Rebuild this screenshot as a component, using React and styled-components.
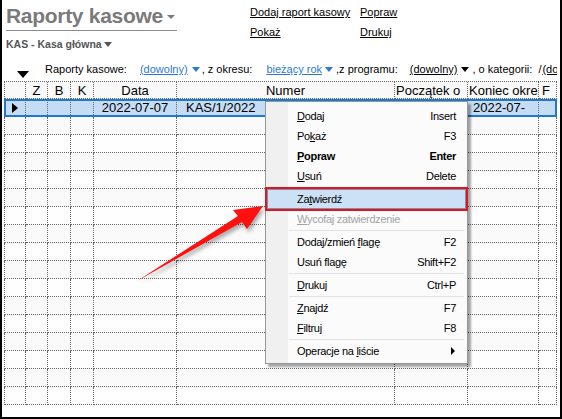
import React from 'react';
import styled, { createGlobalStyle } from 'styled-components';

const Global = createGlobalStyle`
  html, body { margin: 0; padding: 0; background: #fff; }
  body { font-family: "Liberation Sans", Arial, sans-serif; }
  * { box-sizing: border-box; }
`;

const Frame = styled.div`
  position: relative;
  width: 562px;
  height: 419px;
  border-left: 2px solid #000;
  border-right: 2px solid #000;
  border-bottom: 2px solid #000;
  background: #fff;
  overflow: hidden;
  font-family: "Liberation Sans", Arial, sans-serif;
  color: #000;
`;

const TopBar = styled.div`
  display: flex;
  height: 57px;
  padding-left: 4px;
`;

const TitleBlock = styled.div`
  width: 244px;
  display: flex;
  flex-direction: column;
  align-items: flex-start;
  padding-top: 4px;
`;

const Title = styled.div`
  display: flex;
  align-items: center;
  gap: 4px;
  width: 171px;
  white-space: nowrap;
  font-size: 21px;
  font-weight: bold;
  line-height: 24px;
  color: #7a7a7a;
  letter-spacing: -0.3px;
  padding-bottom: 2px;
  border-bottom: 1px solid #8c8c8c;
`;

const Caret = styled.span`
  display: inline-block;
  flex: none;
  width: 0;
  height: 0;
  border-left: ${p => p.$w / 2}px solid transparent;
  border-right: ${p => p.$w / 2}px solid transparent;
  border-top: ${p => p.$h}px solid ${p => p.$color || '#000'};
  margin-left: ${p => p.$ml || 0}px;
  margin-top: ${p => p.$mt || 0}px;
`;

const Subtitle = styled.div`
  display: flex;
  align-items: center;
  gap: 2px;
  margin-top: 6px;
  font-size: 10.5px;
  font-weight: bold;
  line-height: 14px;
  color: #555;
  white-space: nowrap;
`;

const Links = styled.div`
  display: grid;
  grid-template-columns: 110px auto;
  row-gap: 6px;
  padding-top: 5px;
  align-content: start;
`;

const Link = styled.span`
  font-size: 11px;
  line-height: 14px;
  text-decoration: underline;
  color: #000;
  justify-self: start;
`;

const FilterRow = styled.div`
  display: flex;
  align-items: center;
  height: 24px;
  padding-left: 15px;
  font-size: 11px;
  white-space: nowrap;
  overflow: hidden;
  width: 556px;
`;

const DownMark = styled.span`
  flex: none;
  width: 0;
  height: 0;
  border-left: 6px solid transparent;
  border-right: 6px solid transparent;
  border-top: 7px solid #000;
  margin-top: 10px;
  margin-right: 16px;
`;

const Label = styled.span`
  flex: none;
  margin-left: ${p => p.$ml || 0}px;
`;

const Pick = styled.span`
  flex: none;
  display: inline-flex;
  align-items: center;
  gap: 2px;
  margin-left: ${p => p.$ml || 0}px;
  color: ${p => p.$color};
  & > u { text-decoration: underline; }
`;

const Clip = styled.span`
  display: inline-block;
  width: ${p => p.$w}px;
  overflow: hidden;
  vertical-align: bottom;
`;

const Table = styled.div`
  margin-left: 2px;
  width: 553px;
  background: #fcfcfc;
`;

const COLS = '22px 22px 23px 23px 83px 218px 73px 71px 18px';

const Row = styled.div`
  position: relative;
  display: grid;
  grid-template-columns: ${COLS};
  height: ${p => p.$h || 18}px;
  background: ${p => (p.$selected ? '#c4ddf5' : p.$alt ? '#fafafa' : '#fefefe')};
  ${p => p.$header && 'border-top: 1px dotted #666; background: #f9f9f9;'}
  &::after {
    content: '';
    display: ${p => (p.$selected ? 'block' : 'none')};
    position: absolute;
    inset: 0;
    border: 2px solid #1c78d3;
    pointer-events: none;
  }
`;

const Cell = styled.div`
  border-right: 1px dotted #666;
  border-bottom: 1px dotted #666;
  &:first-child { border-left: 1px dotted #666; }
  font-size: 13px;
  line-height: 17px;
  padding: ${p => (p.$header ? '1px 0 0' : '0')} ${p => p.$pl || 0}px;
  white-space: nowrap;
  overflow: hidden;
  display: flex;
  align-items: center;
  justify-content: ${p => (p.$align === 'center' ? 'center' : 'flex-start')};
`;

const RowPointer = styled.span`
  width: 0;
  height: 0;
  border-top: 5px solid transparent;
  border-bottom: 5px solid transparent;
  border-left: 6px solid #000;
  margin-left: 7px;
`;

const Menu = styled.div`
  position: absolute;
  left: 263px;
  top: 101px;
  width: 203px;
  height: 263px;
  border: 1px solid #979797;
  background: linear-gradient(to right, #f0f0f0 0 22px, #fbfbfb 22px);
  box-shadow: 3px 3px 2px rgba(0, 0, 0, 0.35);
  padding: 4px 0 2px;
  font-size: 11px;
  letter-spacing: -0.3px;
`;

const Item = styled.div`
  position: relative;
  display: flex;
  justify-content: space-between;
  align-items: center;
  height: 20px;
  padding: 0 11px 0 31px;
  font-weight: ${p => (p.$bold ? 'bold' : 'normal')};
  color: ${p => (p.$disabled ? '#a3a3a3' : '#000')};
  ${p =>
    p.$active &&
    `
    margin: 0 1px;
    padding: 0 10px 0 30px;
    background: #cce1f6;
    outline: 2px solid #e2141c;
    box-shadow: inset 0 0 0 1px #7d8eae;
  `}
`;

const Sep = styled.div`
  height: 0;
  margin: 1px 3px 1px 23px;
  border-top: 1px solid #e2e2e2;
`;

const SubArrow = styled.span`
  width: 0;
  height: 0;
  border-top: 4px solid transparent;
  border-bottom: 4px solid transparent;
  border-left: 4px solid #000;
  margin-right: 1px;
`;

const ArrowSvg = styled.svg`
  position: absolute;
  left: -2px;
  top: 0;
  width: 562px;
  height: 419px;
  pointer-events: none;
  filter: drop-shadow(2px 3px 2px rgba(0, 0, 0, 0.35));
`;

const K = ({ children }) => <u>{children}</u>;

const headers = [
  { t: '', a: 'left' },
  { t: 'Z', a: 'center' },
  { t: 'B', a: 'center' },
  { t: 'K', a: 'center' },
  { t: 'Data', a: 'center' },
  { t: 'Numer', a: 'center' },
  { t: 'Początek o', a: 'left', pl: 1 },
  { t: 'Koniec okre', a: 'left', pl: 1 },
  { t: 'F', a: 'left', pl: 3 },
];

const menuItems = [
  { l: <><K>D</K>odaj</>, s: 'Insert' },
  { l: <>Po<K>k</K>aż</>, s: 'F3' },
  { l: <><K>P</K>opraw</>, s: 'Enter', bold: true },
  { l: <><K>U</K>suń</>, s: 'Delete' },
  { sep: true },
  { l: <>Za<K>t</K>wierdź</>, s: '', active: true },
  { l: <><K>W</K>ycofaj zatwierdzenie</>, s: '', disabled: true },
  { sep: true },
  { l: <>Dodaj/zmień <K>f</K>lagę</>, s: 'F2' },
  { l: <>Usuń fla<K>g</K>ę</>, s: 'Shift+F2' },
  { sep: true },
  { l: <><K>D</K>rukuj</>, s: 'Ctrl+P' },
  { sep: true },
  { l: <><K>Z</K>najdź</>, s: 'F7' },
  { l: <><K>F</K>iltruj</>, s: 'F8' },
  { sep: true },
  { l: <>Operacje na <K>l</K>iście</>, sub: true },
];

export default function App() {
  const emptyRows = Array.from({ length: 16 });
  return (
    <>
      <Global />
      <Frame>
        <TopBar>
          <TitleBlock>
            <Title>
              Raporty kasowe
              <Caret $w={9} $h={4} $color="#7a7a7a" $mt={2} />
            </Title>
            <Subtitle>
              KAS - Kasa główna
              <Caret $w={8} $h={5} $color="#555" />
            </Subtitle>
          </TitleBlock>
          <Links>
            <Link>Dodaj raport kasowy</Link>
            <Link>Popraw</Link>
            <Link>Pokaż</Link>
            <Link>Drukuj</Link>
          </Links>
        </TopBar>

        <FilterRow>
          <DownMark />
          <Label>Raporty kasowe:</Label>
          <Pick $ml={13} $color="#2b79d3">
            <u>(dowolny)</u>
            <Caret $w={9} $h={5} $color="#2b79d3" $ml={2} />
          </Pick>
          <Label $ml={2}>, z okresu:</Label>
          <Pick $ml={14} $color="#2b79d3">
            <u>bieżący rok</u>
            <Caret $w={9} $h={5} $color="#2b79d3" $ml={1} />
          </Pick>
          <Label $ml={3}>,z programu:</Label>
          <Pick $ml={12} $color="#000">
            <u>(dowolny)</u>
            <Caret $w={9} $h={5} $color="#000" $ml={2} />
          </Pick>
          <Label $ml={3}>, o kategorii:</Label>
          <Label $ml={6}>/</Label>
          <Pick $ml={1} $color="#000">
            <Clip $w={15}><u>(dowolny)</u></Clip>
          </Pick>
        </FilterRow>

        <Table>
          <Row $header $h={18}>
            {headers.map((h, i) => (
              <Cell key={i} $header $align={h.a} $pl={h.pl}>
                {h.t}
              </Cell>
            ))}
          </Row>
          <Row $selected>
            <Cell><RowPointer /></Cell>
            <Cell />
            <Cell />
            <Cell />
            <Cell $align="center">2022-07-07</Cell>
            <Cell $pl={9}>KAS/1/2022</Cell>
            <Cell $pl={8}>2022-07-</Cell>
            <Cell $pl={5}>2022-07-</Cell>
            <Cell />
          </Row>
          {emptyRows.map((_, r) => (
            <Row key={r} $alt={r % 2 === 0}>
              {headers.map((h, i) => (
                <Cell key={i} />
              ))}
            </Row>
          ))}
        </Table>

        <Menu>
          {menuItems.map((m, i) =>
            m.sep ? (
              <Sep key={i} />
            ) : (
              <Item key={i} $bold={m.bold} $disabled={m.disabled} $active={m.active}>
                <span>{m.l}</span>
                {m.sub ? <SubArrow /> : <span>{m.s}</span>}
              </Item>
            )
          )}
        </Menu>

        <ArrowSvg viewBox="0 0 562 419">
          <polygon
            points="137,281 238,216 233,210 263,206 247,229 242,222"
            fill="#ff1010"
          />
        </ArrowSvg>
      </Frame>
    </>
  );
}
